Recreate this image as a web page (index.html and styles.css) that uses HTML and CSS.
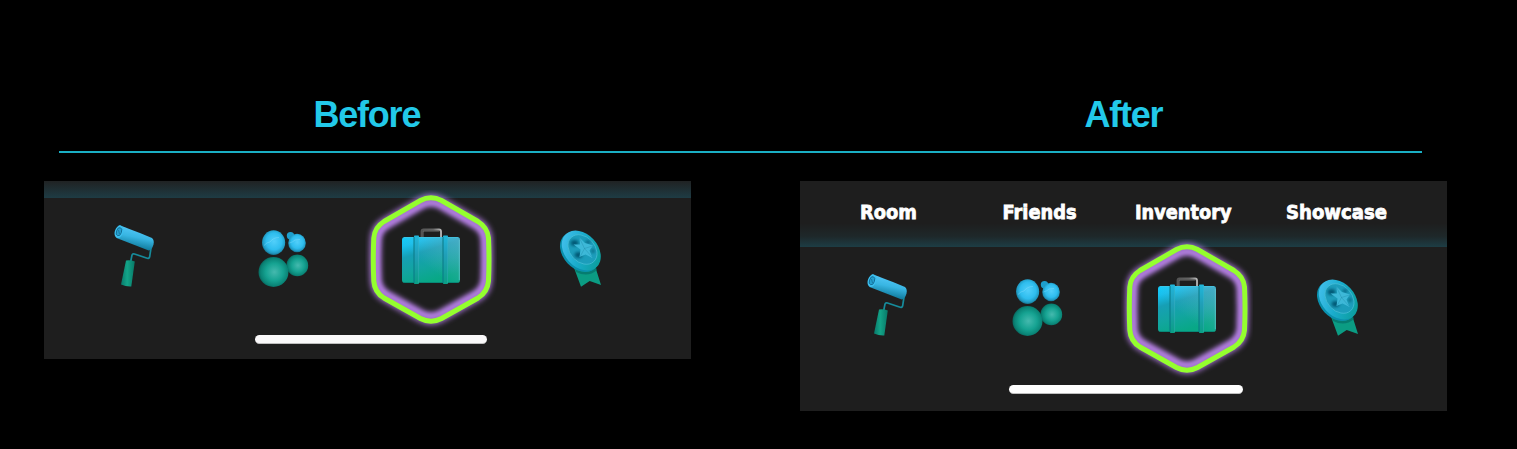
FILE: index.html
```html
<!DOCTYPE html>
<html lang="en">
<head>
<meta charset="utf-8">
<title>Navigation comparison</title>
<link rel="stylesheet" href="styles.css">
</head>
<body>
<svg class="sprite" width="0" height="0" aria-hidden="true">
  <defs>
    <linearGradient id="strap" x1="0" y1="0" x2="0" y2="1"><stop offset="0" stop-color="#20b7dc"/><stop offset=".4" stop-color="#209fb8"/><stop offset="1" stop-color="#0b9f85"/></linearGradient>
    <linearGradient id="case" x1="0" y1="0" x2=".4" y2="1"><stop offset="0" stop-color="#0acfff"/><stop offset=".18" stop-color="#16c0ee"/><stop offset=".4" stop-color="#169fb5"/><stop offset=".7" stop-color="#12a59f"/><stop offset="1" stop-color="#08a886"/></linearGradient>
    <linearGradient id="shine" x1="0" y1="1" x2="1" y2="0"><stop offset=".4" stop-color="#78bbd0" stop-opacity="0"/><stop offset="1" stop-color="#70b9d4" stop-opacity=".55"/></linearGradient>
    <linearGradient id="metal"><stop offset="0" stop-color="#555"/><stop offset=".6" stop-color="#666"/><stop offset="1" stop-color="#bbb"/></linearGradient>
    <linearGradient id="drum" x1=".6" y1=".15" x2=".4" y2=".85"><stop offset="0" stop-color="#4fc5f5"/><stop offset=".45" stop-color="#38b5e2"/><stop offset="1" stop-color="#117d9f"/></linearGradient>
    <linearGradient id="grip"><stop offset="0" stop-color="#08786a"/><stop offset=".45" stop-color="#13a488"/><stop offset="1" stop-color="#087867"/></linearGradient>
    <radialGradient id="blue" cx=".52" cy=".45" r=".57"><stop offset="0" stop-color="#52cffa"/><stop offset=".6" stop-color="#2ebdee"/><stop offset=".85" stop-color="#2099c1"/><stop offset="1" stop-color="#14667d"/></radialGradient>
    <radialGradient id="green" cx=".53" cy=".5" r=".57"><stop offset="0" stop-color="#45b9ae"/><stop offset=".5" stop-color="#16a392"/><stop offset=".8" stop-color="#0a8476"/><stop offset="1" stop-color="#07564f"/></radialGradient>
    <linearGradient id="disc" x1=".2" y1="0" x2=".65" y2="1"><stop offset="0" stop-color="#46c0ee"/><stop offset=".5" stop-color="#1aaccc"/><stop offset="1" stop-color="#0b9d9c"/></linearGradient>
    <filter id="glow" x="-20%" y="-20%" width="140%" height="140%"><feGaussianBlur stdDeviation="2.7"/></filter>
    <filter id="soft" x="-40%" y="-40%" width="180%" height="180%"><feGaussianBlur stdDeviation="1.7"/></filter>
  </defs>
  <symbol id="roller" viewBox="0 0 42 140">
    <path d="M38 58L36.700 66.500Q36.300 69 33.500 68L21.500 64Q19.500 63.300 18.900 65.500L17.800 71" fill="none" stroke="#168b9b" stroke-width="1.700"/>
    <path d="M13 70.500Q17 69.500 21.800 71.500L18.300 96.500Q13 96.800 8 94.500Z" fill="url(#grip)"/>
    <path d="M6 35.500Q9 35.500 39 48Q41.500 50 40.500 54.500Q39 60 35.700 60.500L3.500 48Z" fill="url(#drum)"/>
    <ellipse cx="6" cy="41.700" rx="4.200" ry="6.500" transform="rotate(18 6 41.700)" fill="#3bbfee"/>
    <ellipse cx="6" cy="41.700" rx="2.500" ry="4.200" transform="rotate(18 6 41.700)" fill="#25a0cf" stroke="#146f98" stroke-width=".9"/>
    <path d="M5.500 40L6.500 44" stroke="#177ba6" stroke-width="1"/>
  </symbol>
  <symbol id="friends" viewBox="0 0 52 140">
    <circle cx="32.500" cy="45.800" r="3.700" fill="#1d9fcd"/>
    <ellipse cx="15.600" cy="52.600" rx="11.600" ry="12.300" fill="url(#blue)"/>
    <ellipse cx="39" cy="53" rx="8.800" ry="9.200" fill="url(#blue)"/>
    <circle cx="39.300" cy="75.400" r="10.900" fill="url(#green)"/>
    <circle cx="15.500" cy="82" r="15" fill="url(#green)"/>
    <path d="M6 55.500Q9 52 12 52Q15 47.500 21 47.500M31.500 53Q35 52 37 50L42 49.500" fill="none" stroke="#86ddfc" stroke-width=".7" opacity=".6"/>
  </symbol>
  <symbol id="inventory" viewBox="0 0 132 140">
    <path d="M55.500 10.500Q66 5 76.500 10.500L113 31.500Q122.500 37.500 123.500 48Q124.500 70 123.500 91Q122.500 102 113 108L76.500 128.500Q66 134 55.500 128.500L19 108Q9.500 102 8.800 91Q7.800 70 8.800 48Q9.500 37.500 19 31.500Z" fill="none" stroke="#aa79d8" stroke-width="9" opacity=".7" filter="url(#glow)"/>
    <path d="M57 15Q66 10.500 75 15L110 35Q118.500 40 119.500 49Q120.500 70 119.500 90Q118.500 99.500 110 104.500L75 124Q66 128.500 57 124L22 104.500Q13.500 99.500 12.800 90Q11.800 70 12.800 49Q13.500 40 22 35Z" fill="none" stroke="#b580e4" stroke-width="8" filter="url(#glow)"/>
    <path d="M55.500 10.500Q66 5 76.500 10.500L113 31.500Q122.500 37.500 123.500 48Q124.500 70 123.500 91Q122.500 102 113 108L76.500 128.500Q66 134 55.500 128.500L19 108Q9.500 102 8.800 91Q7.800 70 8.800 48Q9.500 37.500 19 31.500Z" fill="none" stroke="#94ff2e" stroke-width="5"/>
    <path d="M56.500 48V41.500Q56.500 39.500 58.500 39.500H74Q76 39.500 76 41.500V48" fill="none" stroke="url(#metal)" stroke-width="1.800"/>
    <path d="M58 47V41H74.500" fill="none" stroke="#909090" stroke-width=".7"/>
    <rect x="37" y="47" width="58" height="46" rx="3" fill="url(#case)"/>
    <rect x="37" y="47" width="58" height="46" rx="3" fill="url(#shine)"/>
    <path d="M39 92.500H93" stroke="#087f72" opacity=".75"/>
    <path d="M39 47.500H93" stroke="#45c5e3" opacity=".7"/>
    <path d="M94.300 50V90" stroke="#72ccd7" stroke-width=".8" opacity=".7"/>
    <rect x="49" y="45.500" width="5" height="48.500" rx=".8" fill="url(#strap)"/>
    <rect x="78" y="45.500" width="5" height="48.500" rx=".8" fill="url(#strap)"/>
    <path d="M49 47V93M78 47V93" stroke="#087885" stroke-width="1"/>
    <path d="M53.600 47V93M82.600 47V93" stroke="#50bdcb" stroke-width=".6" opacity=".5"/>
  </symbol>
  <symbol id="showcase" viewBox="0 0 44 140">
    <path d="M14.700 77L22 96.800L30.700 91L42 95L35.700 75Z" fill="#0b9c83"/>
    <path d="M16 79Q29 86 37 77L38 80Q29 88 17 82Z" fill="#056c66" opacity=".65"/>
    <ellipse cx="20.500" cy="62" rx="16.500" ry="22.500" transform="rotate(-43 20.500 62)" fill="#0a90ad"/>
    <ellipse cx="22.300" cy="60.500" rx="16.500" ry="22.500" transform="rotate(-43 22.300 60.500)" fill="url(#disc)"/>
    <ellipse cx="23.500" cy="59.500" rx="12.500" ry="16.500" transform="rotate(-43 23.500 59.500)" fill="#1c9dbb" stroke="#4abdd5" stroke-width=".7"/>
    <g filter="url(#soft)" fill="#055975"><ellipse cx="15.500" cy="53" rx="4" ry="3"/><ellipse cx="19.500" cy="65" rx="4" ry="3"/><ellipse cx="29" cy="52" rx="2.500" ry="1.500"/><ellipse cx="34" cy="61" rx="1.500" ry="2"/></g>
    <path d="M20.500 47.500L26 53L34 55.500L30.500 60.500L33.500 68L26.500 64.500L20.500 67L21.500 59.500L14.500 54.500L21 54.500Z" fill="#3db8d8"/>
    <path d="M20.500 48L25.500 58.500L33 67M33.500 56L25.500 58.500L21.500 66" fill="none" stroke="#187f9c" stroke-width=".7" opacity=".45"/>
  </symbol>
</svg>
<main class="comparison">
  <header class="headings"><h1 class="before-title">Before</h1><h1 class="after-title">After</h1></header>
  <section class="panels">
    <nav class="dock before">
      <div class="strip"></div>
      <div class="icons">
        <svg class="roller"><use href="#roller"/></svg><svg class="friends"><use href="#friends"/></svg><svg class="inventory"><use href="#inventory"/></svg><svg class="showcase"><use href="#showcase"/></svg>
      </div>
      <div class="home-bar"></div>
    </nav>
    <nav class="dock after">
      <div class="strip">
        <svg class="labels" width="647" height="66"><text x="60" y="38" textLength="57" lengthAdjust="spacingAndGlyphs">Room</text><text x="202.500" y="38" textLength="74" lengthAdjust="spacingAndGlyphs">Friends</text><text x="335" y="38" textLength="96.500" lengthAdjust="spacingAndGlyphs">Inventory</text><text x="486" y="38" textLength="101" lengthAdjust="spacingAndGlyphs">Showcase</text></svg>
      </div>
      <div class="icons">
        <svg class="roller"><use href="#roller"/></svg><svg class="friends"><use href="#friends"/></svg><svg class="inventory"><use href="#inventory"/></svg><svg class="showcase"><use href="#showcase"/></svg>
      </div>
      <div class="home-bar"></div>
    </nav>
  </section>
</main>
</body>
</html>
```
FILE: styles.css
```css
* { box-sizing: border-box; }
body { margin: 0; background: #000; overflow: hidden; }
.sprite { display: block; height: 0; }
.comparison { width: 1517px; height: 449px; padding-top: 94px; }
.headings { display: grid; grid-template-columns: 770px 1fr; width: 1363px; height: 59px; margin-left: 59.4px; border-bottom: 2px solid #1aafc4; }
h1 { margin: 0; color: #22c9e9; font: bold 36px/42px "Liberation Sans", Arial, sans-serif; letter-spacing: -1.2px; }
.before-title { padding-left: 254px; }
.after-title { padding-left: 255px; }
.panels { display: flex; align-items: flex-start; gap: 109px; padding: 28px 0 0 44px; }
.dock { width: 647px; background: #1e1e1e; }
.before { height: 178px; }
.after { height: 230px; }
.strip { height: 17px; background: linear-gradient(#202223, #1e3c44); }
.after .strip { height: 66px; background: linear-gradient(#1e1e1e 64%, #1e282a 84%, #1d3d45); }
.icons { display: flex; position: relative; height: 140px; margin-top: -8px; padding-left: 69px; }
.icons svg { display: block; flex: none; height: 140px; }
.icons .roller { width: 42px; }
.icons .friends { width: 52px; margin-left: 103px; }
.icons .inventory { width: 132px; margin-left: 55px; }
.icons .showcase { width: 44px; margin-left: 62px; }
.after .icons { padding-left: 66px; }
.after .friends { margin-left: 104px; }
.after .inventory { margin-left: 57px; }
.after .showcase { margin-left: 63px; }
.home-bar { width: 232px; height: 9px; margin: 5px 0 0 211px; border-radius: 5px; background: #faf9fa; border-bottom: 1px solid #bebebe; }
.after .home-bar { width: 234px; margin: 6px 0 0 209px; background: #fff; }
.labels { display: block; }
.labels text { fill: #fff; stroke: #fff; stroke-width: .8px; font: bold 19.5px "DejaVu Sans", sans-serif; }
```
